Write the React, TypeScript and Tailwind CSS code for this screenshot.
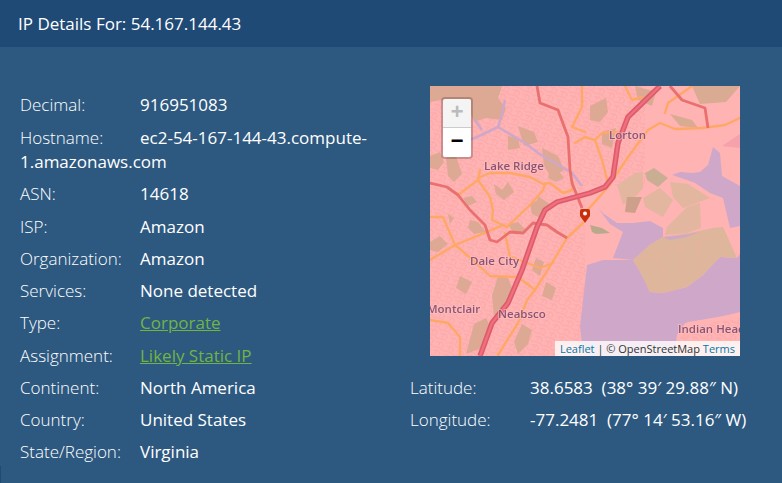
const rows: { label: string; value: string; link?: boolean; nudge?: boolean }[] = [
  { label: 'Decimal:', value: '916951083' },
  { label: 'Hostname:', value: 'ec2-54-167-144-43.compute-1.amazonaws.com', nudge: true },
  { label: 'ASN:', value: '14618' },
  { label: 'ISP:', value: 'Amazon', nudge: true },
  { label: 'Organization:', value: 'Amazon' },
  { label: 'Services:', value: 'None detected' },
  { label: 'Type:', value: 'Corporate', link: true },
  { label: 'Assignment:', value: 'Likely Static IP', link: true, nudge: true },
  { label: 'Continent:', value: 'North America' },
  { label: 'Country:', value: 'United States' },
  { label: 'State/Region:', value: 'Virginia' },
];

const coords = [
  { label: 'Latitude:', value: '38.6583\u00a0 (38° 39′ 29.88″ N)' },
  { label: 'Longitude:', value: '-77.2481\u00a0 (77° 14′ 53.16″ W)' },
];

// scattered land-use patches on the west side
const westPatches = [
  'M0,0 L72,0 L68,12 L76,22 L72,34 L56,32 L44,36 L38,20 L24,18 L10,14 L0,16 Z',
  'M78,50 L88,52 L90,62 L78,64 Z',
  'M88,40 L104,46 L108,56 L94,60 Z',
  'M0,70 L10,66 L14,76 L8,84 L0,82 Z',
  'M16,72 L26,70 L32,88 L24,96 L18,90 Z',
  'M112,62 L128,70 L134,84 L122,92 L114,80 Z',
  'M120,84 L128,84 L134,92 L126,96 L118,92 Z',
  'M33,112 L42,110 L47,116 L38,120 Z',
  'M64,98 L72,104 L78,96 L84,106 L74,114 L66,108 Z',
  'M40,134 L48,136 L56,146 L44,148 L38,142 Z',
  'M78,138 L88,136 L96,144 L84,148 Z',
  'M100,118 L108,114 L118,124 L110,132 L102,128 Z',
  'M0,156 L10,150 L18,158 L8,166 L0,164 Z',
  'M18,128 L24,132 L20,138 Z',
  'M68,190 L78,192 L82,202 L74,226 L64,230 L62,210 Z',
  'M44,238 L56,232 L62,244 L52,262 L36,268 Z',
  'M92,238 L102,244 L98,258 L88,268 L84,256 Z',
  'M106,172 L114,176 L110,190 L102,184 Z',
  'M116,196 L126,202 L122,214 L112,210 Z',
  'M30,190 L42,196 L36,208 L26,202 Z',
  'M108,110 L120,118 L118,124 L106,122 Z',
  'M160,20 L176,12 L178,26 L170,36 L160,34 Z',
  'M172,46 L186,42 L182,62 L172,58 Z',
  'M205,0 L226,6 L222,20 L208,14 Z',
  'M262,0 L310,0 L296,16 L270,18 Z',
  'M240,28 L262,34 L268,42 L250,40 Z',
];

const orangeRoads = [
  'M310,32 L295,39 L272,42 L245,43 L230,37 L218,44 L198,71 L178,101 L155,127',
  'M50,84 L48,94 L60,111 L63,124 L62,134 L77,141 L100,119 L113,104 L115,98',
  'M48,92 L60,87 L80,87 L100,91 L113,98 L120,97 L133,107 L142,104 L143,97',
  'M0,131 L13,131 L25,159',
  'M0,174 L25,159 L57,146 L73,139 L77,141',
  'M28,109 L48,94',
  'M25,159 L43,174 L60,190 L88,191 L105,204',
  'M75,147 L80,171 L90,174 L110,182 L123,177',
  'M137,152 L153,137',
  'M137,152 L122,177 L105,204 L97,214 L88,237 L68,269',
  'M0,234 L18,237 L30,251 L30,270',
  'M195,0 L202,14 L212,11',
  'M235,27 L238,17 L262,0',
  'M155,51 L165,54 L172,47 L188,46',
  'M165,54 L172,74 L178,97',
  'M152,0 L152,21 L142,41 L155,46',
  'M155,51 L145,57',
];

const redRoads = [
  'M107,0 L110,17 L128,24 L138,51 L140,84 L142,97 L152,122',
  'M0,97 L17,101 L28,109 L40,124 L55,139 L60,154 L67,156 L80,146 L93,147 L103,137 L117,139 L127,146 L137,152',
  'M240,0 L252,14 L275,22 L278,42',
];

const highway = 'M230,0 L198,31 L188,57 L183,91 L175,101 L160,107 L127,116 L115,124 L107,141 L92,184 L78,217 L62,237 L50,270';

function MapDrawing() {
  return (
    <svg viewBox="0 0 310 270" className="block w-full h-full blur-[0.3px]" style={{ fontFamily: '"Open Sans", sans-serif' }}>
      <defs>
        <pattern id="streets" width="11" height="9" patternUnits="userSpaceOnUse" patternTransform="rotate(24)">
          <path d="M0,2 L6,1 L11,3 M3,9 L4,4 L8,6 L7,9 M0,6 L3,5" fill="none" stroke="#f79a9f" strokeWidth="0.5" />
        </pattern>
      </defs>
      <rect width="310" height="270" fill="#ffb3b3" />
      {westPatches.map((d) => (
        <path key={d} d={d} fill="#d9ab92" />
      ))}
      <rect x="0" y="0" width="155" height="270" fill="url(#streets)" />
      <rect x="155" y="0" width="60" height="100" fill="url(#streets)" />

      {/* creek west of the highway */}
      <path
        d="M75,14 L72,28 L68,41 L45,52 L28,57 M45,34 L52,44 M68,41 L95,57 L108,67 L142,87 L152,100"
        fill="none"
        stroke="#cfa8c9"
        strokeWidth="2.5"
      />

      {/* land north of the bay */}
      <path d="M187,99 L205,87 L213,86 L213,102 L207,109 L193,119 Z" fill="#e3b6a0" />
      <path d="M215,87 L224,82 L238,92 L228,101 L217,94 Z" fill="#c9ae93" />
      <path d="M197,111 L212,111 L205,127 L195,126 Z" fill="#cda08c" />
      <path d="M213,112 L230,102 L243,114 L233,131 L215,121 Z" fill="#e3b6a0" />
      <path d="M240,96 L258,98 L280,112 L253,122 L243,111 Z" fill="#e3b6a0" />
      <path d="M235,149 L237,141 L257,121 L270,117 L271,142 L257,147 Z" fill="#e3b6a0" />
      <path d="M160,139 L172,142 L180,147 L166,148 L162,146 Z" fill="#b9a98a" />

      {/* water */}
      <path d="M242,89 L250,86 L263,87 L270,86 L278,79 L283,61 L290,67 L292,90 L310,100 L310,140 L300,142 L296,125 L293,112 L280,107 L265,97 L257,94 Z" fill="#cfa8c9" />
      <path d="M168,122 L174,128 L187,137 L203,137 L220,135 L233,142 L233,151 L220,159 L203,174 L183,172 L193,146 L180,138 Z" fill="#cfa8c9" />
      <path d="M157,179 L173,174 L203,174 L212,189 L220,206 L233,207 L257,201 L273,189 L282,179 L290,171 L307,172 L310,168 L310,227 L288,231 L255,237 L247,249 L245,270 L160,270 L152,258 L150,240 Z" fill="#cfa8c9" />

      {/* peninsula */}
      <path d="M203,174 L220,159 L233,151 L260,147 L283,142 L293,141 L307,172 L290,171 L282,179 L273,189 L257,201 L233,207 L220,206 L212,189 Z" fill="#deb69c" />
      <path d="M233,151 L246,150 L260,148 L270,146 L256,151 L240,154 Z" fill="#cfa8c9" />
      <path d="M210,174 L240,165 L290,148 M226,168 L238,200 M248,160 L256,196 M268,155 L272,186" fill="none" stroke="#f3aea0" strokeWidth="0.6" />

      {/* Indian Head */}
      <path d="M247,249 L258,236 L290,231 L310,226 L310,270 L245,270 Z" fill="#ffb3b3" />
      <path d="M250,246 L285,236 L310,232 L310,254 L250,254 Z" fill="url(#streets)" />
      <path d="M292,60 L310,48 L310,62 Z" fill="#f096a8" opacity="0.6" />

      {orangeRoads.map((d) => (
        <path key={d} d={d} fill="none" stroke="#ffa866" strokeWidth="2.4" strokeLinejoin="round" strokeLinecap="round" />
      ))}
      {redRoads.map((d) => (
        <path key={d} d={d} fill="none" stroke="#e9706f" strokeWidth="2.8" strokeLinejoin="round" />
      ))}
      <path d={highway} fill="none" stroke="#dd5a6c" strokeWidth="5.4" strokeLinejoin="round" />
      <path d={highway} fill="none" stroke="#f0707d" strokeWidth="2.2" strokeLinejoin="round" />

      <g fill="#8a5574" fontSize="11.5" fontWeight="600" stroke="#ffc0c0" strokeOpacity="0.6" strokeWidth="2" paintOrder="stroke">
        <text x="54" y="84">Lake Ridge</text>
        <text x="179" y="53">Lorton</text>
        <text x="40" y="179">Dale City</text>
        <text x="-3" y="227">Montclair</text>
        <text x="68" y="232">Neabsco</text>
        <text x="248" y="247">Indian Head</text>
      </g>

      {/* Marker */}
      <path d="M150,125 Q150,123 152,123 L158,123 Q160,123 160,125 L160,130 L155,137 L150,130 Z" fill="#c8300c" />
      <circle cx="155" cy="127.5" r="2" fill="#ffffff" />
    </svg>
  );
}

export default function App() {
  return (
    <div className="h-[483px] overflow-hidden bg-[#2d5981] font-['Open_Sans',sans-serif] text-[17px] text-white relative">
      <header className="h-[47px] bg-[#204a76] flex items-center pl-[18px]">
        <h1 className="text-[17px] font-normal">IP Details For: 54.167.144.43</h1>
      </header>

      <div className="flex pt-[46px]">
        <div className="w-[390px] px-5 shrink-0">
          {rows.map((row) => (
            <div key={row.label} className={row.nudge ? 'pt-px mb-2 leading-6' : 'mb-2 leading-6'}>
              <span className="inline-block w-[120px] font-light">{row.label}</span>
              {row.link ? (
                <a href="#" className="text-[#6fb544] underline">
                  {row.value}
                </a>
              ) : (
                <span className="font-medium">{row.value}</span>
              )}
            </div>
          ))}
        </div>

        <div className="flex-1 -mt-[7px] pl-5">
          <div className="ml-5 w-[310px] h-[270px] relative overflow-hidden">
            <MapDrawing />
            <div className="absolute left-[11px] top-[11px] border-2 border-black/20 rounded-[4px] bg-clip-padding">
              <div className="w-[28px] h-[29px] bg-[#f4f4f4] text-[#bbbbbb] border-b border-[#cccccc] rounded-t-[2px] flex items-center justify-center text-[22px] font-bold font-['Liberation_Mono',monospace]">
                +
              </div>
              <div className="w-[28px] h-[29px] bg-white text-black rounded-b-[2px] flex items-center justify-center text-[22px] font-bold font-['Liberation_Mono',monospace]">
                −
              </div>
            </div>
            <div className="absolute right-0 bottom-0 bg-white/80 px-[5px] text-[11px] leading-[15px] text-[#333333]">
              <a href="#" className="text-[#0078a8]">Leaflet</a> | © OpenStreetMap <a href="#" className="text-[#0078a8]">Terms</a>
            </div>
          </div>

          <div className="mt-5">
            {coords.map((row) => (
              <div key={row.label} className="mb-2 leading-6 whitespace-nowrap">
                <span className="inline-block w-[120px] font-light">{row.label}</span>
                <span className="font-medium">{row.value}</span>
              </div>
            ))}
          </div>
        </div>
      </div>
      <div className="absolute left-0 bottom-0 w-px h-[17px] bg-[#204a76]" />
    </div>
  );
}
